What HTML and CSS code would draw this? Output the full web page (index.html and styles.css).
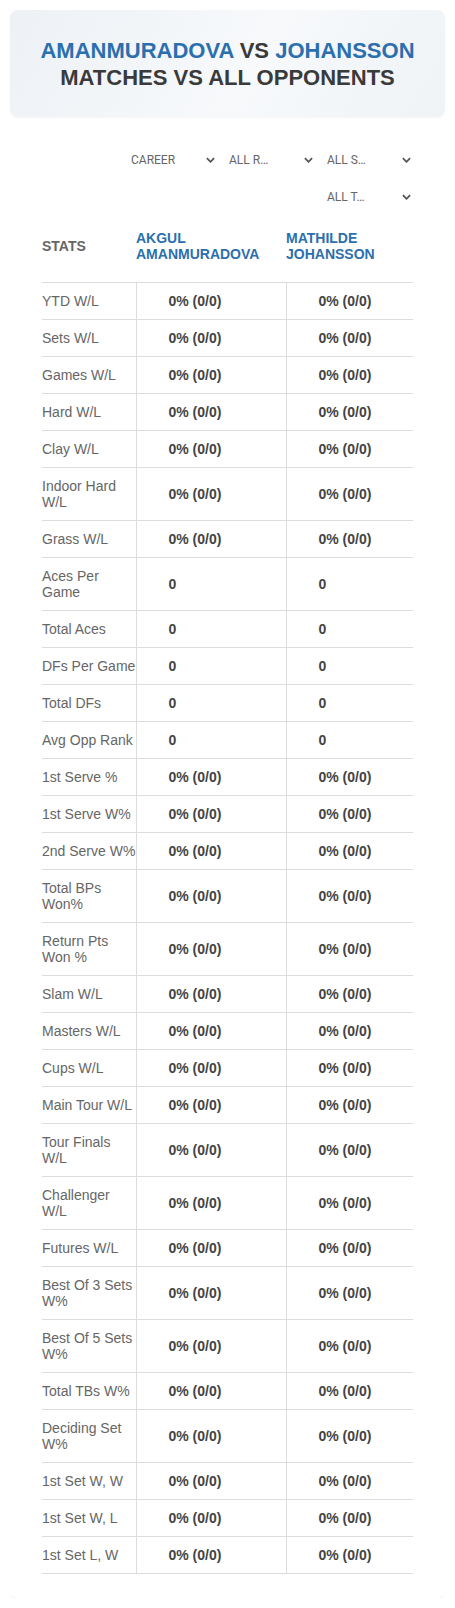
FILE: index.html
```html
<!DOCTYPE html>
<html lang="en">
<head>
    <meta charset="UTF-8">
    <meta name="viewport" content="width=device-width, initial-scale=1.0">
    <title>Amanmuradova vs Johansson</title>
    <link rel="stylesheet" href="styles.css">
</head>
<body>
    <div class="title-card">
        <h1>
            <span class="name">Amanmuradova</span> vs <span class="name">Johansson</span><br>
            Matches vs all opponents
        </h1>
    </div>

    <div class="panel">
        <div class="filters">
            <div class="select"><span class="value">Career</span><svg viewBox="0 0 10 6"><polyline points="1,1 5,5 9,1"/></svg></div>
            <div class="select"><span class="value">All R…</span><svg viewBox="0 0 10 6"><polyline points="1,1 5,5 9,1"/></svg></div>
            <div class="select"><span class="value">All S…</span><svg viewBox="0 0 10 6"><polyline points="1,1 5,5 9,1"/></svg></div>
            <div class="select"><span class="value">All T…</span><svg viewBox="0 0 10 6"><polyline points="1,1 5,5 9,1"/></svg></div>
        </div>

        <table class="stats">
            <colgroup>
                <col class="col-label">
                <col class="col-a">
                <col class="col-b">
            </colgroup>
            <thead>
                <tr>
                    <th class="stats-head">Stats</th>
                    <th class="player">Akgul<br>Amanmuradova</th>
                    <th class="player">Mathilde<br>Johansson</th>
                </tr>
            </thead>
            <tbody id="rows"></tbody>
        </table>
    </div>

    <script>
        const rows = [
            ['YTD W/L', '0% (0/0)'],
            ['Sets W/L', '0% (0/0)'],
            ['Games W/L', '0% (0/0)'],
            ['Hard W/L', '0% (0/0)'],
            ['Clay W/L', '0% (0/0)'],
            ['Indoor Hard W/L', '0% (0/0)'],
            ['Grass W/L', '0% (0/0)'],
            ['Aces Per Game', '0'],
            ['Total Aces', '0'],
            ['DFs Per Game', '0'],
            ['Total DFs', '0'],
            ['Avg Opp Rank', '0'],
            ['1st Serve %', '0% (0/0)'],
            ['1st Serve W%', '0% (0/0)'],
            ['2nd Serve W%', '0% (0/0)'],
            ['Total BPs Won%', '0% (0/0)'],
            ['Return Pts Won %', '0% (0/0)'],
            ['Slam W/L', '0% (0/0)'],
            ['Masters W/L', '0% (0/0)'],
            ['Cups W/L', '0% (0/0)'],
            ['Main Tour W/L', '0% (0/0)'],
            ['Tour Finals W/L', '0% (0/0)'],
            ['Challenger W/L', '0% (0/0)'],
            ['Futures W/L', '0% (0/0)'],
            ['Best Of 3 Sets W%', '0% (0/0)'],
            ['Best Of 5 Sets W%', '0% (0/0)'],
            ['Total TBs W%', '0% (0/0)'],
            ['Deciding Set W%', '0% (0/0)'],
            ['1st Set W, W', '0% (0/0)'],
            ['1st Set W, L', '0% (0/0)'],
            ['1st Set L, W', '0% (0/0)']
        ];

        const tbody = document.getElementById('rows');
        rows.forEach(([label, value]) => {
            const tr = document.createElement('tr');
            tr.innerHTML = `
                <td class="label">${label}</td>
                <td class="val">${value}</td>
                <td class="val">${value}</td>
            `;
            tbody.appendChild(tr);
        });
    </script>
</body>
</html>
```

FILE: styles.css
```css
body {
    margin: 0;
    padding: 10px 10px 0;
    font-family: "Liberation Sans", Arial, sans-serif;
    color: #444;
    background: #fff;
}
.title-card {
    height: 107px;
    display: flex;
    align-items: center;
    justify-content: center;
    border-radius: 8px;
    background: linear-gradient(120deg, #edf1f5 0%, #f7f9fb 55%, #eff3f6 100%);
    box-shadow: 0 1px 2px rgba(0, 0, 0, 0.04);
}
.title-card h1 {
    margin: 0;
    font-size: 22px;
    line-height: 27px;
    font-weight: bold;
    text-align: center;
    text-transform: uppercase;
    color: #3a3a3a;
}
.title-card .name {
    color: #2b6fae;
}
.panel {
    margin-top: 8px;
    padding: 20px 32px 24px;
    border-radius: 8px;
    box-shadow: 0 2px 2px -1px rgba(0, 0, 0, 0.07);
}
.filters {
    display: flex;
    flex-wrap: wrap;
    justify-content: flex-end;
    column-gap: 12px;
    row-gap: 7px;
}
.select {
    width: 86px;
    height: 30px;
    display: flex;
    align-items: center;
    justify-content: space-between;
    font-family: Roboto, sans-serif;
    font-size: 12px;
    color: #666;
    text-transform: uppercase;
}
.select .value {
    white-space: nowrap;
}
.select svg {
    width: 9px;
    height: 6px;
    margin-right: 2px;
    fill: none;
    stroke: #555;
    stroke-width: 2;
}
.stats {
    width: 100%;
    border-collapse: collapse;
    table-layout: fixed;
    font-size: 14px;
}
.col-label {
    width: 94px;
}
.col-a {
    width: 150px;
}
.stats th {
    text-align: left;
    padding: 18px 0 20px;
    line-height: 16px;
    border-bottom: 1px solid #ddd;
    vertical-align: middle;
    text-transform: uppercase;
}
.stats-head {
    color: #666;
}
.player {
    color: #2b6fae;
}
.stats td {
    padding: 10px 0;
    line-height: 16px;
    border-bottom: 1px solid #ddd;
    vertical-align: middle;
}
.stats td.label {
    color: #666;
    padding-right: 0;
}
.stats td.val {
    padding-left: 32px;
    font-weight: bold;
    color: #444;
}
.stats td.label,
.stats td.val:nth-child(2) {
    border-right: 1px solid #ddd;
}
```
